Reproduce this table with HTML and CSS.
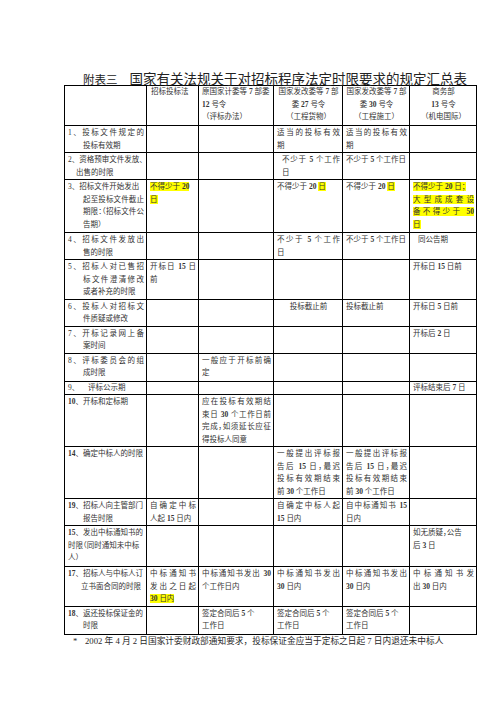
FILE: index.html
```html
<!DOCTYPE html>
<html lang="zh-CN">
<head>
<meta charset="utf-8">
<title>附表三 国家有关法规关于对招标程序法定时限要求的规定汇总表</title>
<link rel="stylesheet" href="styles.css">
</head>
<body>
<div class="page">
  <h1 class="title"><span class="tag">附表三</span><span class="main">国家有关法规关于对招标程序法定时限要求的规定汇总表</span></h1>
  <table class="grid">
    <colgroup>
      <col class="c1"><col class="c2"><col class="c3"><col class="c4"><col class="c5"><col class="c6">
    </colgroup>
    <tr class="h40 head">
      <td></td>
      <td class="pl"><span class="l">招标投标法</span></td>
      <td><span class="l">原国家计委等 <b>7</b> 部委</span><span class="l"><b>12</b> 号令</span><span class="l">（评标办法）</span></td>
      <td class="ctr"><span class="l">国家发改委等 <b>7</b> 部</span><span class="l">委 <b>27</b> 号令</span><span class="l">（工程货物）</span></td>
      <td class="ctr"><span class="l">国家发改委等 <b>7</b> 部</span><span class="l">委 <b>30</b> 号令</span><span class="l">（工程施工）</span></td>
      <td class="ctr"><span class="l">商务部</span><span class="l"><b>13</b> 号令</span><span class="l">（机电国际）</span></td>
    </tr>
    <tr class="h27">
      <td><span class="l j">1、投标文件规定的</span><span class="l in15">投标有效期</span></td>
      <td></td>
      <td></td>
      <td><span class="l j">适当的投标有效</span><span class="l">期</span></td>
      <td><span class="l j">适当的投标有效</span><span class="l">期</span></td>
      <td></td>
    </tr>
    <tr class="h27">
      <td><span class="l">2、资格预审文件发放、</span><span class="l in8">出售的时限</span></td>
      <td></td>
      <td></td>
      <td class="pl8"><span class="l j">不少于 <b>5</b> 个工作</span><span class="l">日</span></td>
      <td><span class="l">不少于 <b>5</b> 个工作日</span></td>
      <td></td>
    </tr>
    <tr class="h53">
      <td><span class="l">3、招标文件开始发出</span><span class="l j in15">起至投标文件截止</span><span class="l j in15">期限<span class="half">：（</span>招标文件公</span><span class="l in15">告期<span class="half">）</span></span></td>
      <td><span class="l"><span class="hl">不得少于 <b>20</b></span></span><span class="l"><span class="hl">日</span></span></td>
      <td></td>
      <td><span class="l">不得少于 <b>20</b> <span class="hl">日</span></span></td>
      <td><span class="l">不得少于 <b>20</b> <span class="hl">日</span></span></td>
      <td><span class="l"><span class="hl">不得少于 <b>20</b> 日<span class="half">；</span></span></span><span class="l j"><span class="hl">大型成成套设</span></span><span class="l j"><span class="hl">备不得少于 <b>50</b></span></span><span class="l"><span class="hl">日</span></span></td>
    </tr>
    <tr class="h26">
      <td><span class="l j">4、招标文件发放出</span><span class="l in15">售的时限</span></td>
      <td></td>
      <td></td>
      <td><span class="l j">不少于 <b>5</b> 个工作</span><span class="l">日</span></td>
      <td><span class="l">不少于 <b>5</b> 个工作日</span></td>
      <td class="pl8"><span class="l">同公告期</span></td>
    </tr>
    <tr class="h39">
      <td><span class="l j">5、招标人对已售招</span><span class="l j in15">标文件澄清修改</span><span class="l in15">或者补充的时限</span></td>
      <td><span class="l j">开标日 <b>15</b> 日</span><span class="l">前</span></td>
      <td></td>
      <td></td>
      <td></td>
      <td><span class="l">开标日 <b>15</b> 日前</span></td>
    </tr>
    <tr class="h26">
      <td><span class="l j">6、投标人对招标文</span><span class="l in15">件质疑或修改</span></td>
      <td></td>
      <td></td>
      <td class="ctr"><span class="l">投标截止前</span></td>
      <td><span class="l">投标截止前</span></td>
      <td><span class="l">开标日 <b>5</b> 日前</span></td>
    </tr>
    <tr class="h25">
      <td><span class="l j">7、开标记录网上备</span><span class="l in15">案时间</span></td>
      <td></td>
      <td></td>
      <td></td>
      <td></td>
      <td><span class="l">开标后 <b>2</b> 日</span></td>
    </tr>
    <tr class="h28">
      <td><span class="l j">8、评标委员会的组</span><span class="l in15">成时限</span></td>
      <td></td>
      <td><span class="l j">一般应于开标前确</span><span class="l">定</span></td>
      <td></td>
      <td></td>
      <td></td>
    </tr>
    <tr class="h13">
      <td><span class="l"><span class="gap">9、</span>评标公示期</span></td>
      <td></td>
      <td></td>
      <td></td>
      <td></td>
      <td><span class="l">评标结束后 <b>7</b> 日</span></td>
    </tr>
    <tr class="h52">
      <td><span class="l"><b>10</b>、开标和定标期</span></td>
      <td></td>
      <td><span class="l j">应在投标有效期结</span><span class="l j">束日 <b>30</b> 个工作日前</span><span class="l j">完成<span class="half">，</span>如须延长应征</span><span class="l">得投标人同意</span></td>
      <td></td>
      <td></td>
      <td></td>
    </tr>
    <tr class="h52">
      <td><span class="l"><b>14</b>、确定中标人的时限</span></td>
      <td></td>
      <td></td>
      <td><span class="l j">一般提出评标报</span><span class="l j">告后 <b>15</b> 日<span class="half">，</span>最迟</span><span class="l j">投标有效期结束</span><span class="l">前 <b>30</b> 个工作日</span></td>
      <td><span class="l j">一般提出评标报</span><span class="l j">告后 <b>15</b> 日<span class="half">，</span>最迟</span><span class="l j">投标有效期结束</span><span class="l">前 <b>30</b> 个工作日</span></td>
      <td></td>
    </tr>
    <tr class="h26">
      <td><span class="l"><b>19</b>、招标人向主管部门</span><span class="l in15">报告时限</span></td>
      <td><span class="l j">自确定中标</span><span class="l">人起 <b>15</b> 日内</span></td>
      <td></td>
      <td><span class="l j">自确定中标人起</span><span class="l"><b>15</b> 日内</span></td>
      <td><span class="l j">自中标通知书 <b>15</b></span><span class="l">日内</span></td>
      <td></td>
    </tr>
    <tr class="h41">
      <td><span class="l"><b>15</b>、发出中标通知书的</span><span class="l">时限<span class="half">（</span>同时通知未中标</span><span class="l">人<span class="half">）</span></span></td>
      <td></td>
      <td></td>
      <td></td>
      <td></td>
      <td><span class="l">如无质疑<span class="half">，</span>公告</span><span class="l">后 <b>3</b> 日</span></td>
    </tr>
    <tr class="h38">
      <td><span class="l"><b>17</b>、招标人与中标人订</span><span class="l in13">立书面合同的时限</span></td>
      <td><span class="l j">中标通知书</span><span class="l j">发出之日起</span><span class="l"><span class="hl"><b>30</b> 日内</span></span></td>
      <td><span class="l j">中标通知书发出 <b>30</b></span><span class="l">个工作日内</span></td>
      <td><span class="l j">中标通知书发出</span><span class="l"><b>30</b> 日内</span></td>
      <td><span class="l j">中标通知书发出</span><span class="l"><b>30</b> 日内</span></td>
      <td><span class="l j">中标通知书发</span><span class="l">出 <b>30</b> 日内</span></td>
    </tr>
    <tr class="h28">
      <td><span class="l"><b>18</b>、返还投标保证金的</span><span class="l in15">时限</span></td>
      <td></td>
      <td><span class="l">签定合同后 <b>5</b> 个</span><span class="l">工作日</span></td>
      <td><span class="l">签定合同后 <b>5</b> 个</span><span class="l">工作日</span></td>
      <td><span class="l">签定合同后 <b>5</b> 个</span><span class="l">工作日</span></td>
      <td></td>
    </tr>
  </table>
  <p class="note"><span class="star">*</span>2002 年 4 月 2 日国家计委财政部通知要求，投标保证金应当于定标之日起 7 日内退还未中标人</p>
</div>
</body>
</html>
```

FILE: styles.css
```css
* {
  box-sizing: border-box;
}

html,
body {
  margin: 0;
  padding: 0;
  background: #ffffff;
}

body {
  color: #2a2a2a;
  font-family: "Liberation Serif", "Noto Sans CJK SC", serif;
}

.page {
  padding: 65px 0 0 64px;
}

.title {
  margin: 0 0 4px 19px;
  height: 16px;
  line-height: 16px;
  font-weight: normal;
  white-space: nowrap;
  color: #222;
}

.tag {
  font-size: 11.5px;
  margin-right: 12px;
}

.main {
  font-size: 13.5px;
}

.grid {
  border-collapse: collapse;
  table-layout: fixed;
  width: 412px;
  font-size: 7.5px;
  line-height: 12.5px;
  color: #333;
}

.grid td {
  border: 1px solid #000;
  padding: 1px 2px 0 3px;
  vertical-align: top;
  overflow: visible;
}

.grid .head td {
  padding-top: 0;
}

.grid .h13 td {
  padding-top: 0;
}

.c1 { width: 82px; }
.c2 { width: 52px; }
.c3 { width: 75px; }
.c4 { width: 69px; }
.c5 { width: 67px; }
.c6 { width: 67px; }

.h13 { height: 13px; }
.h25 { height: 25px; }
.h26 { height: 26px; }
.h27 { height: 27px; }
.h28 { height: 28px; }
.h38 { height: 38px; }
.h39 { height: 39px; }
.h40 { height: 40px; }
.h41 { height: 41px; }
.h52 { height: 52px; }
.h53 { height: 53px; }

.l {
  display: block;
  white-space: nowrap;
}

.j {
  white-space: normal;
  text-align: justify;
  text-align-last: justify;
}

.half {
  font-feature-settings: "halt";
}

.in8 { padding-left: 8px; }
.in13 { padding-left: 13px; }
.in15 { padding-left: 15px; }

.grid td.pl { padding-left: 4px; }
.grid td.pl8 { padding-left: 8px; }

.ctr {
  text-align: center;
}

.gap {
  display: inline-block;
  width: 20px;
}

.hl {
  background: #ffff00;
}

.grid b {
  font-weight: bold;
}

.note {
  margin: 1px 0 0 0;
  padding-left: 9px;
  font-size: 8.7px;
  line-height: 11px;
  white-space: nowrap;
  color: #2a2a2a;
}

.star {
  display: inline-block;
  width: 12px;
}
```
